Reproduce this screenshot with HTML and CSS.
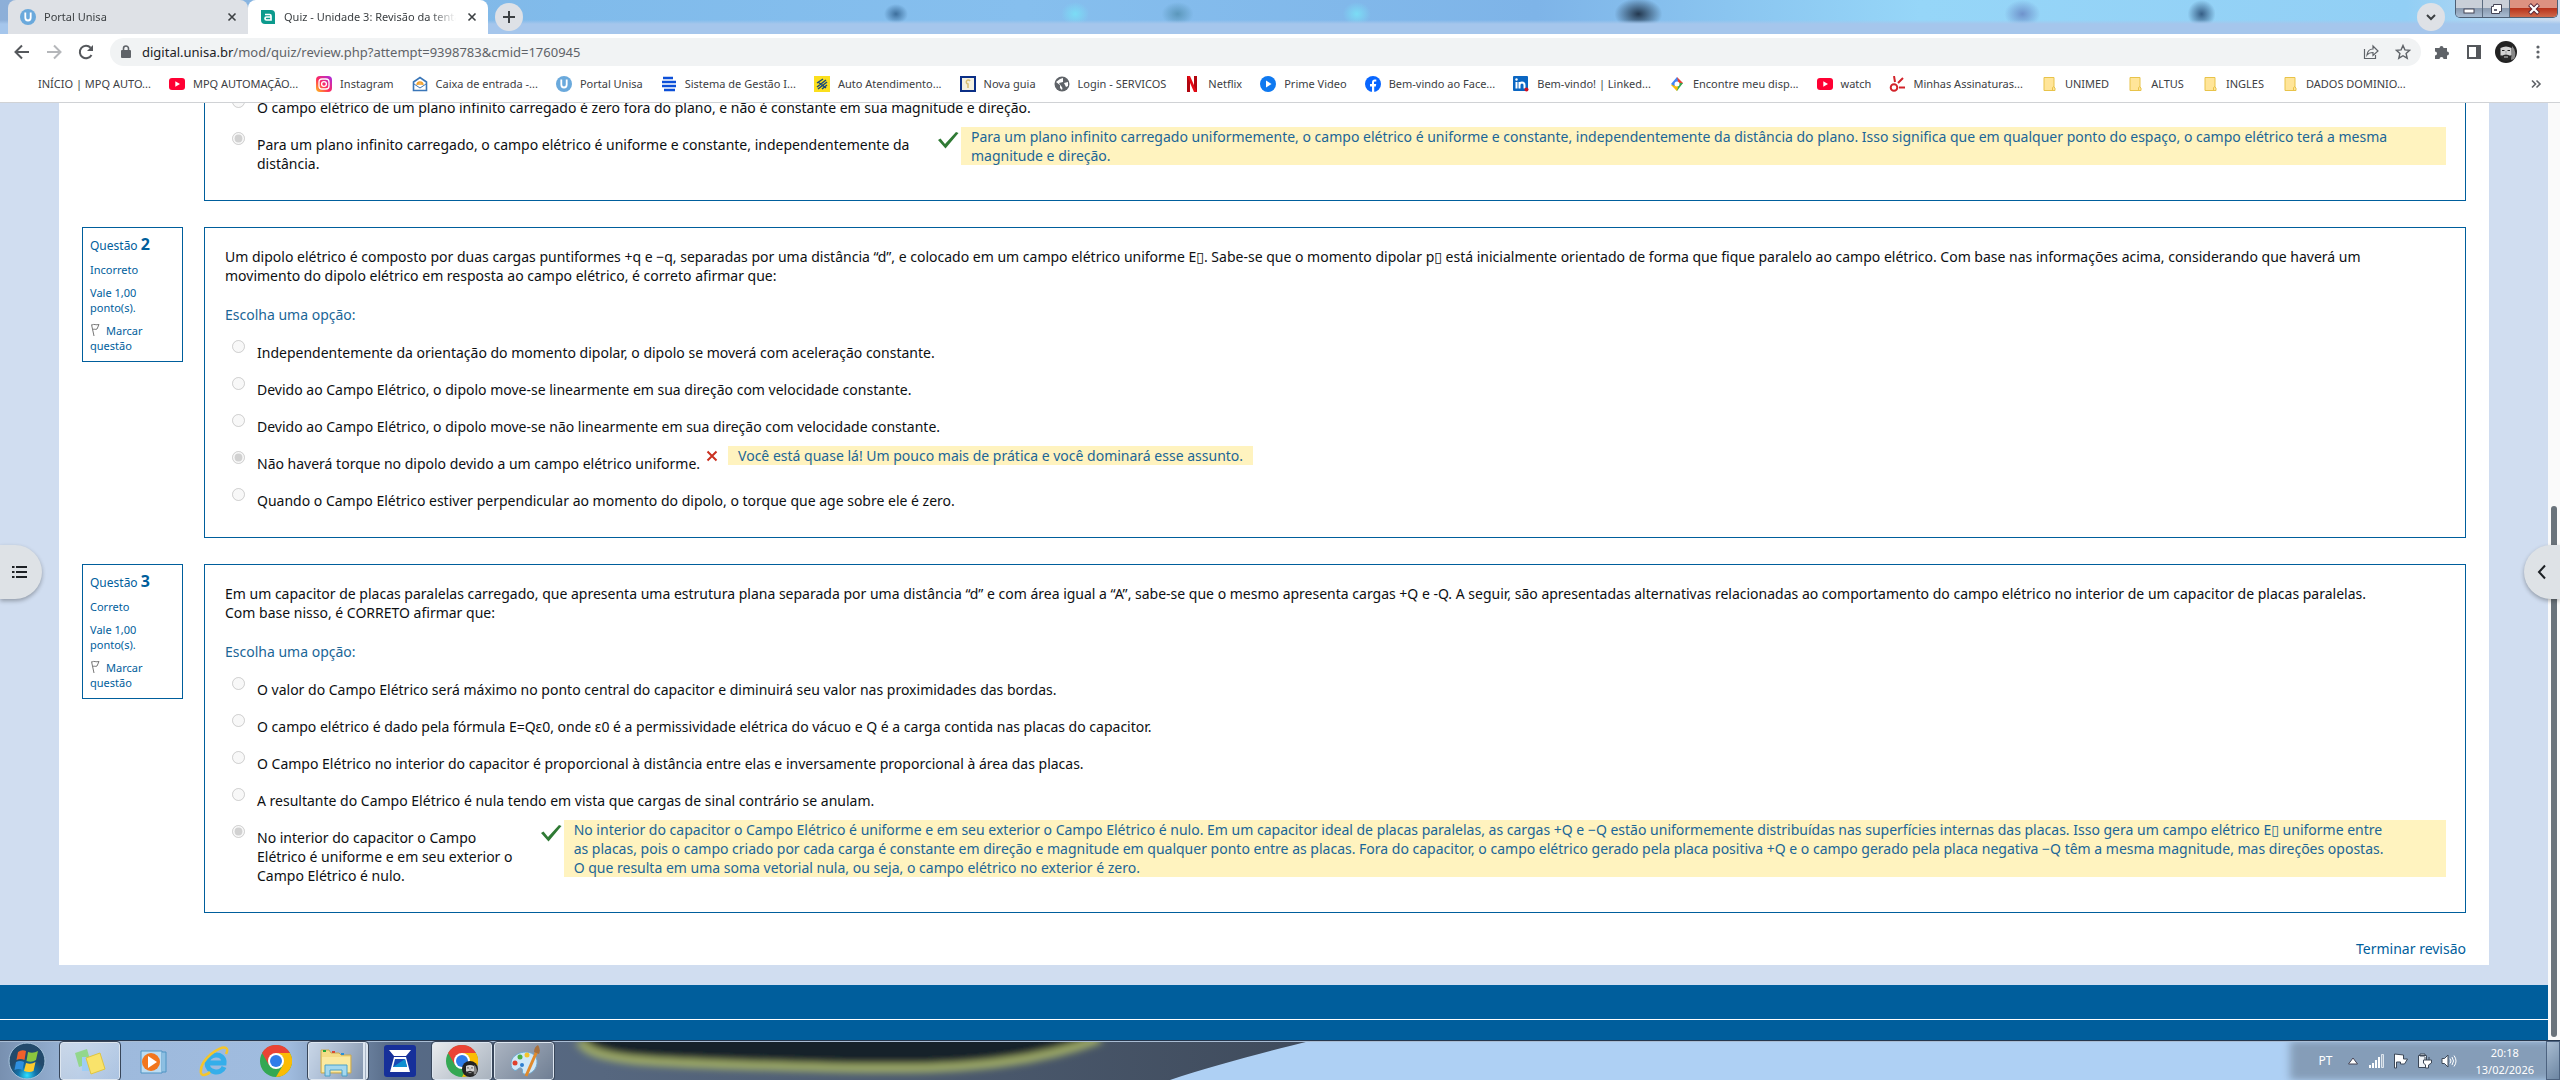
FILE: index.html
```html
<!DOCTYPE html>
<html lang="pt-BR">
<head>
    <meta charset="UTF-8">
    <meta name="viewport" content="width=device-width, initial-scale=1.0">
    <title>Quiz - Unidade 3: Revisão da tentativa</title>
    <link rel="stylesheet" href="styles.css">
</head>
<body>
    <svg class="sprites" aria-hidden="true">
        <symbol id="i-unisa" viewBox="0 0 16 16"><circle cx="8" cy="8" r="8" fill="#6aa9dc"/><path d="M5.3 3.5v5a2.7 3 0 0 0 5.4 0v-5" fill="none" stroke="#fff" stroke-width="1.8"/></symbol>
        <symbol id="i-close" viewBox="0 0 16 16"><path d="M4.5 4.5l7 7M11.5 4.5l-7 7" stroke="#3c4043" stroke-width="1.6"/></symbol>
        <symbol id="i-youtube" viewBox="0 0 16 16"><rect y="2" width="16" height="12" rx="3" fill="#ff0033"/><path d="M6.3 5.3v5.4L11 8z" fill="#fff"/></symbol>
        <symbol id="i-folder" viewBox="0 0 16 16"><path d="M3 1.5h10v9.500l1 1v2.500H3z" fill="#ffe599" stroke="#e8c34a"/><path d="M11.500 14.500v-3l1.500-1" fill="none" stroke="#e8c34a"/></symbol>
        <symbol id="i-chrome" viewBox="0 0 32 32"><circle cx="16" cy="16" r="16" fill="#34a853"/><path d="M2.100 8A16 16 0 0 1 29.900 8H16L9 20z" fill="#ea4335"/><path d="M29.900 8A16 16 0 0 1 16 32l7-12-.5-8.500L16 8z" fill="#fbbc05"/><circle cx="16" cy="16" r="8" fill="#fff"/><circle cx="16" cy="16" r="6" fill="#2f7de9"/></symbol>
        <symbol id="i-face" viewBox="0 0 22 22"><circle cx="11" cy="11" r="11" fill="#222"/><path d="M17 5a11 11 0 0 1 2 13l-3 1z" fill="#888"/><path d="M5.500 7q5.500-3 11 0v7q-1 5-5.500 5t-5.500-5z" fill="#d4d4d4"/><path d="M7 9.500h2.500M12.500 9.500H15" stroke="#222"/><path d="M11 10v2.500" stroke="#999"/><path d="M5.500 14q2 1 3 0 2.500-1 5 0 1 1 3 0-.5 6-5.500 6t-5.500-6z" fill="#2a2a2a"/><path d="M9 16h4" stroke="#ccc"/></symbol>
        <symbol id="i-check" viewBox="0 0 22 18"><path d="M1 9l2.500-1.500L8 13 19 1l2.500 1L8.500 17.500z" fill="#2f7a34"/></symbol>
        <symbol id="i-flag" viewBox="0 0 11 14"><path d="M1.500 1.500L4 13M2 2c2-1.500 4 .5 7-.5L7 6C5.500 7 4 5.500 3 6.500" fill="none" stroke="#777"/></symbol>
    </svg>

    <header class="browser">
        <div class="tabs">
            <div class="tab">
                <svg class="ico"><use href="#i-unisa"/></svg>
                <span class="tab-title">Portal Unisa</span>
                <button class="plain" aria-label="Fechar guia"><svg class="ico"><use href="#i-close"/></svg></button>
            </div>
            <div class="tab active">
                <svg class="ico" viewBox="0 0 16 16"><path d="M1 1h10a4 4 0 0 1 4 4v10H5a4 4 0 0 1-4-4z" fill="#0c9a8d"/><path d="M5 5.500h4.500q1.500 0 1.500 1.500v4H6.500a1.500 1.500 0 0 1 0-3H11" fill="none" stroke="#fff" stroke-width="1.700"/></svg>
                <span class="tab-title">Quiz - Unidade 3: Revisão da tentativa</span>
                <button class="plain" aria-label="Fechar guia"><svg class="ico"><use href="#i-close"/></svg></button>
            </div>
            <button class="round new-tab" aria-label="Nova guia"><svg class="ico" viewBox="0 0 16 16"><path d="M8 2v12M2 8h12" stroke="#3c4043" stroke-width="2"/></svg></button>
            <button class="round tab-search" aria-label="Pesquisar guias"><svg class="ico" viewBox="0 0 16 16"><path d="M4 6l4 4 4-4" fill="none" stroke="#3c4043" stroke-width="2"/></svg></button>
            <div class="window-buttons">
                <button aria-label="Minimizar"><svg viewBox="0 0 12 12"><rect x="1" y="6" width="10" height="4" fill="#fff" stroke="#445"/></svg></button>
                <button aria-label="Restaurar"><svg viewBox="0 0 12 12"><path d="M3.500 1.500h8v7h-2v2h-8v-7h2z" fill="#fff" stroke="#445"/><rect x="4" y="6" width="3" height="2" fill="#667"/></svg></button>
                <button class="win-close" aria-label="Fechar"><svg viewBox="0 0 12 12"><path d="M1.500 1.500l9 9M10.500 1.500l-9 9" stroke="#523" stroke-width="4"/><path d="M2 2l8 8M10 2l-8 8" stroke="#fff" stroke-width="2.200"/></svg></button>
            </div>
        </div>

        <div class="toolbar">
            <button class="plain" aria-label="Voltar"><svg class="ico" viewBox="0 0 16 16"><path d="M15 8H2M8 1.500L1.500 8 8 14.500" fill="none" stroke="#55585c" stroke-width="2"/></svg></button>
            <button class="plain" aria-label="Avançar"><svg class="ico" viewBox="0 0 16 16"><path d="M1 8h13M8 1.500L14.500 8 8 14.500" fill="none" stroke="#b5b7ba" stroke-width="2"/></svg></button>
            <button class="plain" aria-label="Recarregar"><svg class="ico" viewBox="0 0 16 16"><path d="M13.500 11A6.200 6.200 0 1 1 12.600 3.800" fill="none" stroke="#55585c" stroke-width="2"/><path d="M15 1v6H9z" fill="#55585c"/></svg></button>
            <div class="omnibox">
                <svg class="ico" viewBox="0 0 16 16"><rect x="3" y="6" width="10" height="8" rx="1" fill="#5f6368"/><path d="M5.500 6V4.500a2.500 2.500 0 0 1 5 0V6" fill="none" stroke="#5f6368" stroke-width="1.600"/></svg>
                <div class="url" role="textbox" aria-label="Endereço"><b>digital.unisa.br</b>/mod/quiz/review.php?attempt=9398783&amp;cmid=1760945</div>
                <button class="plain" aria-label="Compartilhar"><svg class="ico" viewBox="0 0 16 16"><path d="M1.500 5v9.500h11V11M4 11c.5-4 3-6 6-6V2l5 5-5 4.500V8.500C7.500 8.500 5.500 9 4 11z" fill="none" stroke="#5f6368" stroke-width="1.200"/></svg></button>
                <button class="plain" aria-label="Favorito"><svg class="ico" viewBox="0 0 16 16"><path d="M8 1.500l1.900 4.400 4.800.4-3.600 3.200 1.100 4.700L8 11.700l-4.200 2.500 1.100-4.700L1.300 6.300l4.800-.4z" fill="none" stroke="#5f6368" stroke-width="1.400"/></svg></button>
            </div>
            <button class="plain" aria-label="Extensões"><svg class="ico" viewBox="0 0 16 16"><path d="M1 4h4.500a2 2 0 1 1 4 0H13v3.500a2 2 0 1 1 0 4V15H9.500a2 2 0 0 0-4 0H1v-3.500a2 2 0 0 0 0-4z" fill="#5f6368"/></svg></button>
            <button class="plain" aria-label="Painel lateral"><svg class="ico" viewBox="0 0 16 16"><path d="M1 1h14v14H1zM3 3v10h7V3z" fill="#55585c" fill-rule="evenodd"/></svg></button>
            <button class="plain" aria-label="Perfil"><svg class="avatar"><use href="#i-face"/></svg></button>
            <button class="plain" aria-label="Menu"><svg class="ico" viewBox="0 0 16 16"><g fill="#5f6368"><circle cx="8" cy="3" r="1.600"/><circle cx="8" cy="8" r="1.600"/><circle cx="8" cy="13" r="1.600"/></g></svg></button>
        </div>

        <nav class="bookmarks">
            <a href="#"><span>INÍCIO | MPQ AUTO...</span></a>
            <a href="#"><svg class="ico"><use href="#i-youtube"/></svg><span>MPQ AUTOMAÇÃO...</span></a>
            <a href="#"><svg class="ico" viewBox="0 0 16 16"><defs><linearGradient id="ig" x1="0" y1="1" x2="1" y2="0"><stop offset="0" stop-color="#ffc21a"/><stop offset=".45" stop-color="#ff2a5f"/><stop offset="1" stop-color="#a52be8"/></linearGradient></defs><rect width="16" height="16" rx="4" fill="url(#ig)"/><rect x="3" y="3" width="10" height="10" rx="3" fill="none" stroke="#fff" stroke-width="1.300"/><circle cx="8" cy="8" r="2.400" fill="none" stroke="#fff" stroke-width="1.300"/></svg><span>Instagram</span></a>
            <a href="#"><svg class="ico" viewBox="0 0 16 16"><path d="M1.500 6L8 1.500 14.500 6v8.500h-13z" fill="#fff" stroke="#3a76b8" stroke-width="1.600"/><path d="M2 8l6 4 6-4" fill="none" stroke="#3a76b8"/><path d="M5 9a3 3 0 1 1 6 0M5 8h6" fill="none" stroke="#f0a030" stroke-width="1.300"/></svg><span>Caixa de entrada -...</span></a>
            <a href="#"><svg class="ico"><use href="#i-unisa"/></svg><span>Portal Unisa</span></a>
            <a href="#"><svg class="ico" viewBox="0 0 16 16"><path d="M2 2h10M1 6h14M1 10h14M3 14h11" stroke="#0c4fd8" stroke-width="2.400"/></svg><span>Sistema de Gestão I...</span></a>
            <a href="#"><svg class="ico" viewBox="0 0 16 16"><rect width="16" height="16" fill="#fbdf1d"/><path d="M3 7l6-4M3 11l9-7M4 13l9-7M8 13l5-4M4 6l8 6" stroke="#1a4a7a" stroke-width="1.500"/></svg><span>Auto Atendimento...</span></a>
            <a href="#"><svg class="ico" viewBox="0 0 16 16"><rect width="16" height="16" fill="#0b2f86"/><rect x="2" y="2" width="12" height="12" fill="#f4f0df"/><path d="M8 12V8a2 2 0 1 1 2-3" fill="none" stroke="#d6bd72" stroke-width="1.500"/></svg><span>Nova guia</span></a>
            <a href="#"><svg class="ico" viewBox="0 0 16 16"><circle cx="8" cy="8" r="7.500" fill="#5f6368"/><path d="M2 6l4 3v3l2 2c1-2 0-3-1-4l-2-3 4-1V2L6 3zM10 7l4-1v4l-2 1z" fill="#fff"/></svg><span>Login - SERVICOS</span></a>
            <a href="#"><svg class="ico" viewBox="0 0 16 16"><path d="M3 0h3v16H3zM10 0h3v16h-3z" fill="#b1060f"/><path d="M3 0h3l7 16h-3z" fill="#e50914"/></svg><span>Netflix</span></a>
            <a href="#"><svg class="ico" viewBox="0 0 16 16"><circle cx="8" cy="8" r="8" fill="#0f79f0"/><path d="M6 4.500v7L11.500 8z" fill="#fff"/></svg><span>Prime Video</span></a>
            <a href="#"><svg class="ico" viewBox="0 0 16 16"><circle cx="8" cy="8" r="8" fill="#0866ff"/><path d="M7 16v-5.500H5V8h2V6.500C7 4.300 8.200 3.500 9.700 3.500h1.600v2H10c-.8 0-1 .4-1 1.200V8h2.200l-.4 2.500H9.200V16z" fill="#fff"/></svg><span>Bem-vindo ao Face...</span></a>
            <a href="#"><svg class="ico" viewBox="0 0 16 16"><rect width="15" height="15" rx="1" fill="#0a66c2"/><path d="M3.500 6v6.500M6.500 6v6.500M6.500 9c0-3.500 5-3.500 5 0v3.500" fill="none" stroke="#fff" stroke-width="2"/><circle cx="3.500" cy="3.500" r="1.200" fill="#fff"/><circle cx="13.500" cy="13.500" r="2" fill="#d11124"/></svg><span>Bem-vindo! | Linked...</span></a>
            <a href="#"><svg class="ico" viewBox="0 0 16 16"><path d="M8 1l6 6-3 3-3-3z" fill="#ea4335"/><path d="M14 7l-6 8-3-4 5-4z" fill="#34a853"/><path d="M8 15L2 9l3-2 4 4z" fill="#fbbc05"/><path d="M2 8l6-7 1 4-4 5z" fill="#4285f4"/><circle cx="8" cy="8" r="2.500" fill="#fff"/></svg><span>Encontre meu disp...</span></a>
            <a href="#"><svg class="ico"><use href="#i-youtube"/></svg><span>watch</span></a>
            <a href="#"><svg class="ico" viewBox="0 0 16 16"><g fill="none" stroke="#d2232a" stroke-width="2"><circle cx="5" cy="11.500" r="3.300"/><path d="M5 0l1 6M14 2L9 7M10 11.500h6"/></g></svg><span>Minhas Assinaturas...</span></a>
            <a href="#"><svg class="ico"><use href="#i-folder"/></svg><span>UNIMED</span></a>
            <a href="#"><svg class="ico"><use href="#i-folder"/></svg><span>ALTUS</span></a>
            <a href="#"><svg class="ico"><use href="#i-folder"/></svg><span>INGLES</span></a>
            <a href="#"><svg class="ico"><use href="#i-folder"/></svg><span>DADOS DOMINIO...</span></a>
            <button class="plain more" aria-label="Mais favoritos"><svg class="ico" viewBox="0 0 16 16"><path d="M4 4.500L7.500 8 4 11.500M8.500 4.500L12 8l-3.500 3.500" fill="none" stroke="#5f6368" stroke-width="1.600"/></svg></button>
        </nav>
    </header>

    <div class="viewport">
        <div class="page">
            <main class="content">
                <section class="question">
                    <div class="info"></div>
                    <div class="formulation">
                        <div class="answers">
                            <div class="option">
                                <input type="radio" name="q1" id="q1d" disabled>
                                <label for="q1d">O campo elétrico de um plano infinito carregado é zero fora do plano, e não é constante em sua magnitude e direção.</label>
                            </div>
                            <div class="option">
                                <input type="radio" name="q1" id="q1e" disabled checked>
                                <label for="q1e">Para um plano infinito carregado, o campo elétrico é uniforme e constante, independentemente da distância.</label>
                                <svg class="mark"><use href="#i-check"/></svg>
                                <div class="feedback">Para um plano infinito carregado uniformemente, o campo elétrico é uniforme e constante, independentemente da distância do plano. Isso significa que em qualquer ponto do espaço, o campo elétrico terá a mesma magnitude e direção.</div>
                            </div>
                        </div>
                    </div>
                </section>

                <section class="question">
                    <div class="info">
                        <h3>Questão <b>2</b></h3>
                        <p>Incorreto</p>
                        <p>Vale 1,00 ponto(s).</p>
                        <p><a href="#"><svg class="flag"><use href="#i-flag"/></svg>Marcar questão</a></p>
                    </div>
                    <div class="formulation">
                        <p class="qtext">Um dipolo elétrico é composto por duas cargas puntiformes +q e −q, separadas por uma distância “d”, e colocado em um campo elétrico uniforme E▯. Sabe-se que o momento dipolar p▯ está inicialmente orientado de forma que fique paralelo ao campo elétrico. Com base nas informações acima, considerando que haverá um<br>movimento do dipolo elétrico em resposta ao campo elétrico, é correto afirmar que:</p>
                        <p class="prompt">Escolha uma opção:</p>
                        <div class="answers">
                            <div class="option">
                                <input type="radio" name="q2" id="q2a" disabled>
                                <label for="q2a">Independentemente da orientação do momento dipolar, o dipolo se moverá com aceleração constante.</label>
                            </div>
                            <div class="option">
                                <input type="radio" name="q2" id="q2b" disabled>
                                <label for="q2b">Devido ao Campo Elétrico, o dipolo move-se linearmente em sua direção com velocidade constante.</label>
                            </div>
                            <div class="option">
                                <input type="radio" name="q2" id="q2c" disabled>
                                <label for="q2c">Devido ao Campo Elétrico, o dipolo move-se não linearmente em sua direção com velocidade constante.</label>
                            </div>
                            <div class="option">
                                <input type="radio" name="q2" id="q2d" disabled checked>
                                <label for="q2d">Não haverá torque no dipolo devido a um campo elétrico uniforme.</label>
                                <svg class="mark wrong" viewBox="0 0 12 12"><path d="M1.500 1.500l9 9M10.500 1.500l-9 9" stroke="#ca3120" stroke-width="2"/></svg>
                                <div class="feedback">Você está quase lá! Um pouco mais de prática e você dominará esse assunto.</div>
                            </div>
                            <div class="option">
                                <input type="radio" name="q2" id="q2e" disabled>
                                <label for="q2e">Quando o Campo Elétrico estiver perpendicular ao momento do dipolo, o torque que age sobre ele é zero.</label>
                            </div>
                        </div>
                    </div>
                </section>

                <section class="question">
                    <div class="info">
                        <h3>Questão <b>3</b></h3>
                        <p>Correto</p>
                        <p>Vale 1,00 ponto(s).</p>
                        <p><a href="#"><svg class="flag"><use href="#i-flag"/></svg>Marcar questão</a></p>
                    </div>
                    <div class="formulation">
                        <p class="qtext">Em um capacitor de placas paralelas carregado, que apresenta uma estrutura plana separada por uma distância “d” e com área igual a “A”, sabe-se que o mesmo apresenta cargas +Q e -Q. A seguir, são apresentadas alternativas relacionadas ao comportamento do campo elétrico no interior de um capacitor de placas paralelas.<br>Com base nisso, é CORRETO afirmar que:</p>
                        <p class="prompt">Escolha uma opção:</p>
                        <div class="answers">
                            <div class="option">
                                <input type="radio" name="q3" id="q3a" disabled>
                                <label for="q3a">O valor do Campo Elétrico será máximo no ponto central do capacitor e diminuirá seu valor nas proximidades das bordas.</label>
                            </div>
                            <div class="option">
                                <input type="radio" name="q3" id="q3b" disabled>
                                <label for="q3b">O campo elétrico é dado pela fórmula E=Qε0, onde ε0 é a permissividade elétrica do vácuo e Q é a carga contida nas placas do capacitor.</label>
                            </div>
                            <div class="option">
                                <input type="radio" name="q3" id="q3c" disabled>
                                <label for="q3c">O Campo Elétrico no interior do capacitor é proporcional à distância entre elas e inversamente proporcional à área das placas.</label>
                            </div>
                            <div class="option">
                                <input type="radio" name="q3" id="q3d" disabled>
                                <label for="q3d">A resultante do Campo Elétrico é nula tendo em vista que cargas de sinal contrário se anulam.</label>
                            </div>
                            <div class="option">
                                <input type="radio" name="q3" id="q3e" disabled checked>
                                <label class="narrow" for="q3e">No interior do capacitor o Campo Elétrico é uniforme e em seu exterior o Campo Elétrico é nulo.</label>
                                <svg class="mark"><use href="#i-check"/></svg>
                                <div class="feedback">No interior do capacitor o Campo Elétrico é uniforme e em seu exterior o Campo Elétrico é nulo. Em um capacitor ideal de placas paralelas, as cargas +Q e −Q estão uniformemente distribuídas nas superfícies internas das placas. Isso gera um campo elétrico E▯ uniforme entre<br>as placas, pois o campo criado por cada carga é constante em direção e magnitude em qualquer ponto entre as placas. Fora do capacitor, o campo elétrico gerado pela placa positiva +Q e o campo gerado pela placa negativa −Q têm a mesma magnitude, mas direções opostas.<br>O que resulta em uma soma vetorial nula, ou seja, o campo elétrico no exterior é zero.</div>
                            </div>
                        </div>
                    </div>
                </section>

                <a class="finish" href="#">Terminar revisão</a>
            </main>
            <footer class="site-footer"><div class="footer-top"></div></footer>
        </div>
        <div class="scrollbar"><div class="thumb"></div></div>
        <button class="drawer left" aria-label="Abrir índice do curso"><svg class="ico" viewBox="0 0 16 16"><path d="M5 3h11M5 8h11M5 13h11M1 3h2.500M1 8h2.500M1 13h2.500" stroke="#1d2125" stroke-width="2"/></svg></button>
        <button class="drawer right" aria-label="Abrir gaveta de blocos"><svg class="ico" viewBox="0 0 16 16"><path d="M11 1.500L5 8l6 6.500" fill="none" stroke="#1d2125" stroke-width="2"/></svg></button>
    </div>

    <div class="taskbar">
        <!-- papel de parede visto através da barra -->
        <svg class="wallpaper" viewBox="0 0 2560 40" preserveAspectRatio="none">
            <defs>
                <filter id="soft" x="-5%" y="-50%" width="110%" height="200%"><feGaussianBlur stdDeviation="4"/></filter>
                <linearGradient id="sky"><stop offset="0" stop-color="#7890b0"/><stop offset=".06" stop-color="#9db9dc"/><stop offset=".22" stop-color="#a0bcdf"/><stop offset=".3" stop-color="#566a86"/><stop offset=".46" stop-color="#56677f"/><stop offset="1" stop-color="#3f4b5c"/></linearGradient>
            </defs>
            <rect width="2560" height="40" fill="#aed0f4"/>
            <path d="M0 0H1310C1270 10 1210 26 1170 40H0z" fill="url(#sky)"/>
            <g filter="url(#soft)">
                <path d="M580-10C590 22 640 24 800 26S1020 34 1100-10z" fill="#16202c"/>
                <path d="M580 0C590 20 640 22 780 26S1010 32 1100-2" fill="none" stroke="#9fab68" stroke-width="9"/>
            </g>
            <rect x="2290" width="270" height="40" fill="#859db8" filter="url(#soft)"/>
        </svg>
        <button class="start" aria-label="Iniciar"><svg viewBox="0 0 38 38"><defs><radialGradient id="orb" cy=".9"><stop offset="0" stop-color="#2ee0ff"/><stop offset=".5" stop-color="#1371a8"/><stop offset="1" stop-color="#234a6c"/></radialGradient></defs><circle cx="19" cy="19" r="18" fill="url(#orb)" stroke="#a8c4dc"/><path d="M10 10q4-3 8-1l-1.500 9q-4-2-8 0z" fill="#f0602a"/><path d="M20 10q5 2 10-1l-2 9q-4 3-9.500 1z" fill="#8cc63e"/><path d="M8 20q4-2 8 0l-1.500 8q-4-2-8 0z" fill="#2f8fe0"/><path d="M18 21q5 2 9.500-1l-2 9q-4 2-9.500 0z" fill="#ffcb2e"/></svg></button>
        <button class="task open" aria-label="Notas"><svg viewBox="0 0 32 32"><path d="M1 8l12-4 4 14-12 4z" fill="#93d78c"/><path d="M8 12h14v14H8z" fill="#9fcdf5"/><path d="M12 13l14-5 5 16-14 5z" fill="#f9e36b" stroke="#e0c540"/></svg></button>
        <button class="task" aria-label="Media Player"><svg viewBox="0 0 32 32"><path d="M5 6h21v22H5z" fill="#bcdcf2" stroke="#4f94c4"/><path d="M26 7h4v20h-4" fill="#8dbfe2" stroke="#4f94c4"/><circle cx="15" cy="17" r="9" fill="#f2761d"/><path d="M12 11v12l9-6z" fill="#fff"/></svg></button>
        <button class="task" aria-label="Internet Explorer"><svg viewBox="0 0 32 32"><path d="M26 22c-3 8-17 6-17-4S27 7 26 18H10" fill="none" stroke="#35aeea" stroke-width="5"/><path d="M28 3C22 0 1 15 3 28c1 4 7 1 9-1M28 3c2 1 1 4 0 6" fill="none" stroke="#f4c52c" stroke-width="2.500"/></svg></button>
        <button class="task" aria-label="Google Chrome"><svg><use href="#i-chrome"/></svg></button>
        <button class="task open stacked" aria-label="Explorador de Arquivos"><svg viewBox="0 0 32 32"><path d="M1 5h8l2 3h8l2 2h10v18H1z" fill="#f4dc86" stroke="#c9a850"/><path d="M2 12h28v15H2z" fill="#fbe9a0"/><path d="M3 5h3v2H3z" fill="#27a838"/><path d="M12 6h3v2h-3z" fill="#d94a30"/><path d="M21 8h3v2h-3z" fill="#2a8fd8"/><path d="M5 31V20h22v11h-5v-6H10v6z" fill="#a5d8ee" stroke="#4aa0c8"/></svg></button>
        <button class="task" aria-label="Scanner"><svg viewBox="0 0 32 32"><rect width="32" height="32" rx="3" fill="#16309a"/><path d="M5 5h22l-5 6H10zM10 12h12l4 15H6z" fill="#fff"/><path d="M11 14h10l2 8H9z" fill="#1b49b4"/><path d="M21 14l2 8H9z" fill="#0f8fd0"/></svg></button>
        <button class="task open current" aria-label="Google Chrome"><svg viewBox="0 0 32 32"><use href="#i-chrome" width="32" height="32"/><use href="#i-face" x="16" y="16" width="16" height="16"/></svg></button>
        <button class="task open" aria-label="Paint"><svg viewBox="0 0 32 32"><path d="M3 18C4 7 22 3 28 12c4 9-4 19-12 17-3-1 0-5-3-6s-4 4-7 2c-2-1-3-3-3-7z" fill="#cfe8f8" stroke="#6fa9cf"/><circle cx="7" cy="18" r="2.500" fill="#e0402c"/><circle cx="12" cy="12" r="2.500" fill="#4cae46"/><circle cx="19" cy="10" r="2.500" fill="#f3c42c"/><circle cx="14" cy="20" r="2" fill="#2f7fd0"/><path d="M29 6L18 31" stroke="#e08a2c" stroke-width="3"/><path d="M26 7q0-5 4-7 3 4 1 9z" fill="#a9713e"/></svg></button>
        <div class="tray">
            <span class="lang">PT</span>
            <svg class="small" viewBox="0 0 16 16"><path d="M8 5l4.500 6h-9z" fill="#fff" stroke="#445"/></svg>
            <svg class="ico" viewBox="0 0 16 16"><path d="M0 12h2v3H0zM3 10h2v5H3zM6 7h2v8H6zM9 4h2v11H9z" fill="#fff"/><path d="M12.500 1.500h2v13h-2z" fill="#a8b6c6" stroke="#dde6ee"/></svg>
            <svg class="ico" viewBox="0 0 16 16"><path d="M1.500 1v14h2V9h4v2h4l3-5h-4V2z" fill="#fff" stroke="#3c4858"/></svg>
            <svg class="ico" viewBox="0 0 16 16"><path d="M1.500 2.500h8v12h-8zM3 1h5v2H3z" fill="#eef3f8" stroke="#3c4858"/><path d="M8 4v3M12 4v3M6.500 7h8v3l-3 2v3h-3v-3l-2-2z" fill="#fff" stroke="#3c4858"/></svg>
            <svg class="ico" viewBox="0 0 16 16"><path d="M1 5.500h2.500L7 2v12L3.500 10.500H1z" fill="#fff" stroke="#3c4858"/><path d="M9 5.500q2 2.500 0 5M11 4q3 4 0 8M13 2.500q4 5.500 0 11" fill="none" stroke="#fff"/></svg>
            <time class="clock">20:18<br>13/02/2026</time>
            <button class="show-desktop" aria-label="Mostrar área de trabalho"></button>
        </div>
    </div>
</body>
</html>
```
FILE: styles.css
```css
* {
    box-sizing: border-box;
}

body {
    margin: 0;
    height: 100vh;
    display: flex;
    flex-direction: column;
    overflow: hidden;
    font-family: "Noto Sans", "DejaVu Sans", sans-serif;
    font-size: 14px;
    line-height: 19px;
    color: #0d0f12;
}

h3, p {
    margin: 0;
}

a {
    color: inherit;
    text-decoration: none;
}

button {
    padding: 0;
    border: 0;
    font: inherit;
}

.sprites {
    display: none;
}

.ico {
    display: block;
    flex: none;
    width: 16px;
    height: 16px;
}

.plain {
    background: none;
}

/* navegador */
.browser {
    flex: none;
    background: #fff;
    border-bottom: 1px solid #d0d2d5;
    font-size: 11px;
    line-height: 16px;
    color: #3c4043;
}

.tabs {
    display: flex;
    align-items: center;
    height: 34px;
    padding-left: 8px;
    background:
        linear-gradient(to bottom, transparent 20px, #a5c6ec 24px),
        radial-gradient(ellipse 24px 16px at 64% 14px, #23384f, transparent),
        radial-gradient(ellipse 12px 10px at 35% 14px, #3d6f9d, transparent),
        radial-gradient(ellipse 16px 12px at 46% 14px, #5b97bb, transparent),
        radial-gradient(ellipse 14px 12px at 42% 14px, #7bdcf5, transparent),
        radial-gradient(ellipse 14px 12px at 53% 14px, #7bdcf5, transparent),
        radial-gradient(ellipse 18px 14px at 79% 14px, #6f93cc, transparent),
        radial-gradient(ellipse 14px 14px at 86% 14px, #365e86, transparent),
        linear-gradient(to right, #8dafd8, #80bbeb 22%, #86bfee 40%, #7eb4e8 60%, #96d6f8 75%, #92cff5 94%, #cbdcf0);
}

.tab {
    display: flex;
    align-items: center;
    gap: 8px;
    width: 240px;
    height: 34px;
    padding: 0 8px 0 12px;
    border-radius: 8px 8px 0 0;
    background: #dee1e6;
}

.tab.active {
    background: #fff;
}

.tab-title {
    flex: 1;
    overflow: hidden;
    white-space: nowrap;
    mask-image: linear-gradient(to right, #000 85%, transparent);
}

.round {
    display: grid;
    place-items: center;
    width: 28px;
    height: 28px;
    border-radius: 50%;
    background: #dee1e6;
}

.new-tab {
    margin-left: 7px;
}

.tab-search {
    margin-left: auto;
}

.window-buttons {
    display: flex;
    align-self: flex-start;
    margin: 0 2px 0 10px;
    border: 1px solid #4d5f74;
    border-top: 0;
    border-radius: 0 0 5px 5px;
    overflow: hidden;
}

.window-buttons button {
    display: grid;
    place-items: center;
    width: 27px;
    height: 17px;
    border-right: 1px solid #5b6c80;
    background: linear-gradient(#c9cfd8 50%, #8a9bb0 50%, #a9bcd2);
}

.window-buttons .win-close {
    width: 47px;
    border: 0;
    background: linear-gradient(#dd9181 50%, #b8331c 50%, #cf6a4c);
}

.window-buttons svg {
    width: 12px;
    height: 12px;
}

.toolbar {
    display: flex;
    align-items: center;
    gap: 16px;
    padding: 4px 14px 0;
}

.omnibox {
    flex: 1;
    display: flex;
    align-items: center;
    gap: 16px;
    height: 28px;
    margin-right: -3px;
    padding: 0 10px 0 8px;
    border-radius: 14px;
    background: #f1f3f4;
}

.omnibox > .ico {
    margin-right: -8px;
}

.url {
    flex: 1;
    font-size: 13px;
    color: #5f6368;
}

.url b {
    font-weight: 400;
    color: #202124;
}

.avatar {
    display: block;
    width: 22px;
    height: 22px;
    margin: 0 -3px;
}

.bookmarks {
    display: flex;
    align-items: center;
    gap: 18px;
    height: 36px;
    padding: 0 16px 0 38px;
    white-space: nowrap;
}

.bookmarks a {
    display: flex;
    align-items: center;
    gap: 8px;
}

.bookmarks .more {
    margin-left: auto;
}

/* página da revisão */
.viewport {
    position: relative;
    flex: 1;
    min-height: 0;
    display: flex;
}

/* a página aparece rolada até o fim */
.page {
    flex: 1;
    display: flex;
    flex-direction: column;
    justify-content: flex-end;
    overflow: hidden;
    background: #d0ddf0;
}

.content {
    flex: none;
    display: flex;
    flex-direction: column;
    gap: 26px;
    margin: 0 59px 20px;
    padding: 0 23px 7px;
    background: #fff;
}

.question {
    display: flex;
    align-items: flex-start;
    gap: 21px;
}

.info {
    flex: none;
    width: 101px;
    padding: 8px 7px;
    border: 1px solid #005e9c;
    font-size: 11px;
    line-height: 15px;
    color: #005e9c;
}

.info:empty {
    border: 0;
}

.info h3 {
    font-size: 12px;
    font-weight: 400;
    line-height: 16px;
}

.info h3 b {
    font-size: 16px;
}

.info p {
    margin-top: 8px;
}

.info .flag {
    width: 11px;
    height: 14px;
    margin-right: 5px;
    vertical-align: -2px;
}

.formulation {
    flex: 1;
    padding: 19px 19px 17px 20px;
    border: 1px solid #005e9c;
}

.prompt {
    margin: 20px 0 11px;
    color: #1b6697;
}

.option {
    display: flex;
    align-items: flex-start;
    padding-bottom: 10px;
}

.option input {
    flex: none;
    width: 13px;
    height: 13px;
    margin: 5px 12px 0 7px;
}

.option label {
    padding-top: 8px;
}

.option .narrow {
    flex: none;
    width: 12.5%;
    padding-right: 12px;
}

.mark {
    flex: none;
    width: 22px;
    height: 18px;
    margin: 4px 2px 0 5px;
}

.mark.wrong {
    width: 12px;
    height: 12px;
    margin: 4px 10px 0 6px;
}

.feedback {
    padding: 0 10px;
    background: #fff3bf;
    color: #1b6697;
}

.narrow ~ .feedback {
    flex: 1;
}

.finish {
    align-self: flex-end;
    color: #005e9c;
}

.site-footer {
    flex: none;
    padding-bottom: 20px;
    background: #005e9c;
}

.footer-top {
    height: 35px;
    border-bottom: 1px solid #fff;
}

.scrollbar {
    flex: none;
    display: flex;
    flex-direction: column;
    justify-content: flex-end;
    width: 12px;
    padding: 3px;
    background: #fafafa;
}

.thumb {
    height: 57%;
    border-radius: 3px;
    background: #6a737b;
}

.drawer {
    position: absolute;
    top: 442px;
    display: grid;
    place-items: center;
    height: 54px;
    background: #dee2e6;
    box-shadow: 0 2px 4px rgba(0, 0, 0, .3);
}

.drawer.left {
    left: 0;
    width: 42px;
    padding-right: 4px;
    border-radius: 0 27px 27px 0;
}

.drawer.right {
    right: 0;
    width: 36px;
    border-radius: 27px 0 0 27px;
}

/* barra de tarefas */
.taskbar {
    position: relative;
    flex: none;
    display: flex;
    align-items: center;
    gap: 2px;
    height: 40px;
    padding-left: 8px;
    border-top: 1px solid #26384f;
    box-shadow: inset 0 1px #a9bdd4;
}

.wallpaper {
    position: absolute;
    inset: 0;
    z-index: -1;
    width: 100%;
    height: 100%;
}

.start {
    width: 38px;
    margin-right: 12px;
    background: none;
}

.start svg {
    display: block;
}

.task {
    display: grid;
    place-items: center;
    width: 60px;
    height: 38px;
    border: 1px solid transparent;
    border-radius: 3px;
    background: none;
}

.task svg {
    width: 32px;
    height: 32px;
}

.task.open {
    border-color: #dde6f0;
    outline: 1px solid #38465a;
    background: linear-gradient(135deg, rgba(255, 255, 255, .5), rgba(255, 255, 255, .15));
}

.task.current {
    background: linear-gradient(135deg, #e8ebee, #a8b2be);
}

.task.stacked {
    border-right: 5px double #dde6f0;
}

.tray {
    display: flex;
    align-items: center;
    gap: 8px;
    margin-left: auto;
    font-size: 12px;
    line-height: 17px;
    color: #fff;
}

.tray .small {
    width: 16px;
    height: 16px;
    margin-left: 5px;
}

.clock {
    margin: 0 4px 0 10px;
    text-align: center;
    font-size: 11px;
}

.show-desktop {
    width: 14px;
    height: 39px;
    border: 1px solid #4d6380;
    background: linear-gradient(135deg, #a9bdd2, #6d86a3);
}
```
